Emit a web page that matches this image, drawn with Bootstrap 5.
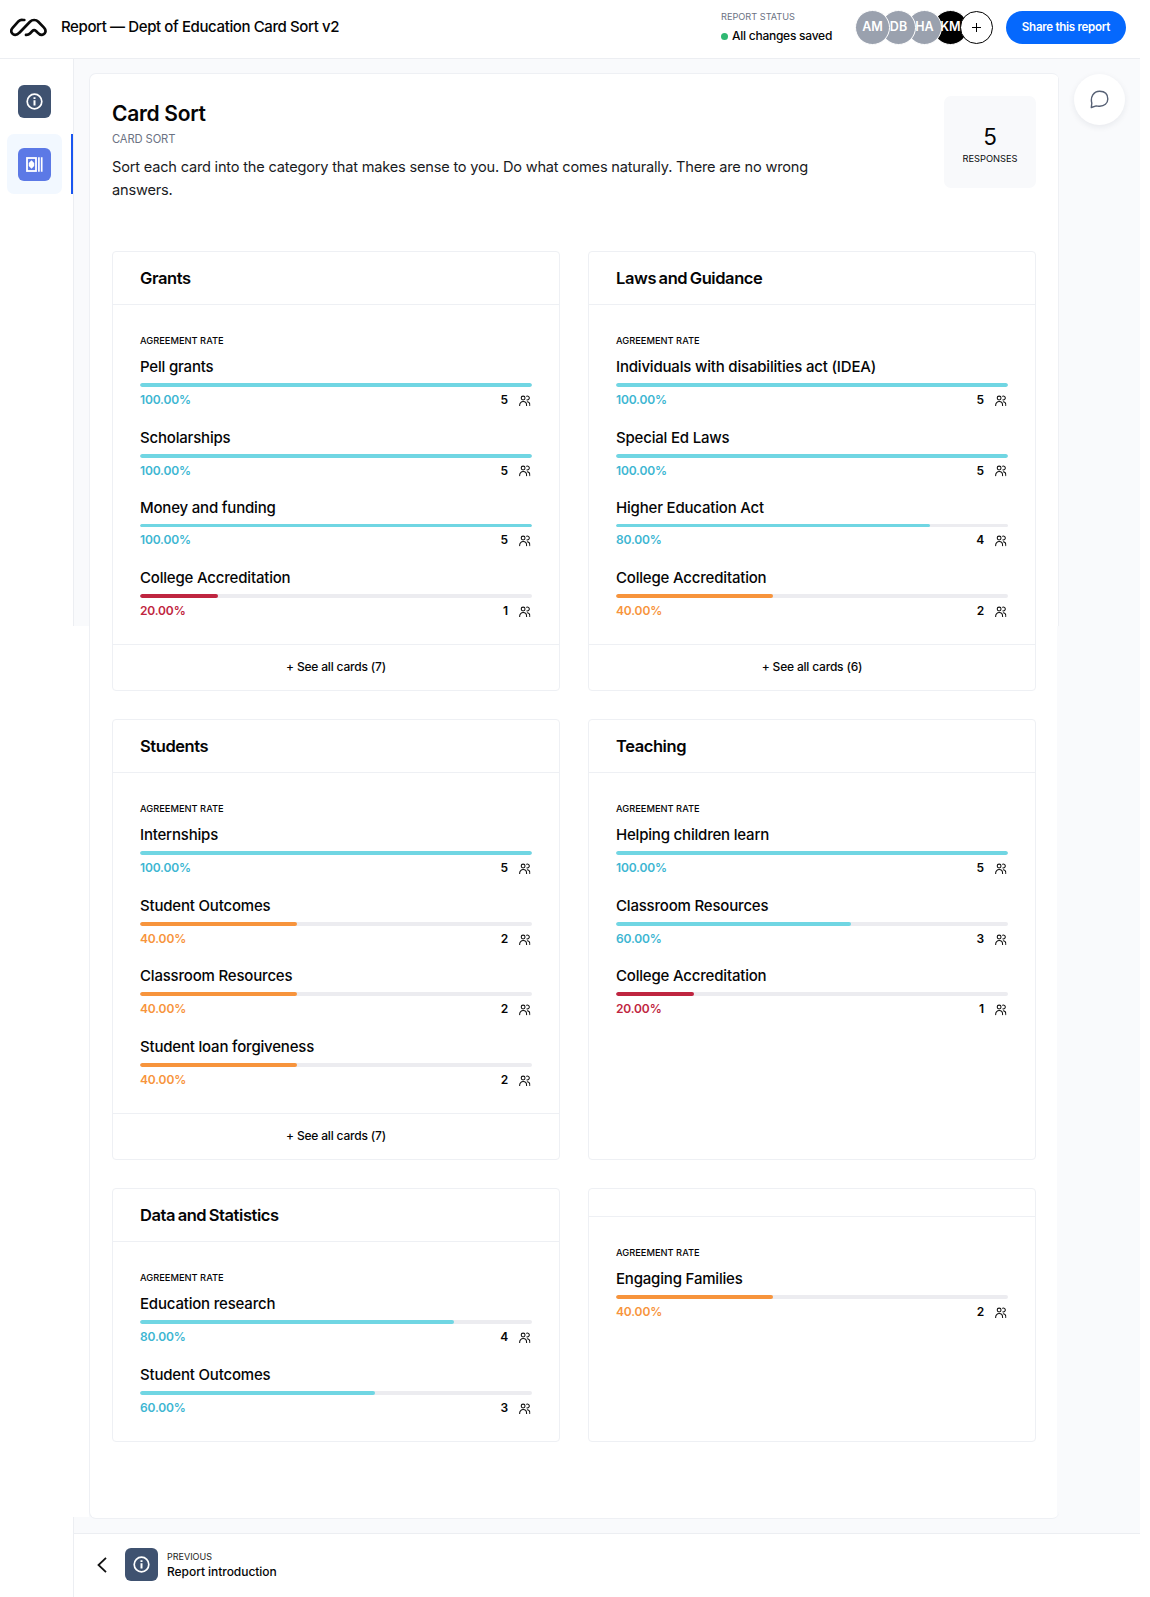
<!DOCTYPE html>
<html lang="en">
<head>
<meta charset="utf-8">
<meta name="viewport" content="width=device-width, initial-scale=1">
<title>Report — Dept of Education Card Sort v2</title>
<link href="https://cdn.jsdelivr.net/npm/bootstrap@5.3.0/dist/css/bootstrap.min.css" rel="stylesheet">
<style>
body{font-family:Inter,"Liberation Sans",sans-serif;color:#050506;background:#fff;height:1597px;overflow:hidden}
.app{width:1140px;height:1597px}
.topbar{height:59px;border-bottom:1px solid #eceef2;padding:0 14px 4px 10px}
.doc-title{font-size:15px;font-weight:500;line-height:20px;margin-left:14px;letter-spacing:-.39px}
.cap{font-size:9.2px;line-height:14px;color:#6b7283}
.saved{font-size:12px;font-weight:500;line-height:16px;letter-spacing:-.25px}
.foot .saved{letter-spacing:-.05px}
.dot{width:7px;height:7px;background:#2fb872}
.status{width:134px}
.ava{width:35px;height:35px;border:1.5px solid #fff;margin-right:-9px;font-size:12.5px;font-weight:600;color:#fff;background:#9aa1ae;position:relative}
.ava.black{background:#000;margin-right:-8px}
.ava.plus{width:33px;height:33px;background:#fff;border:1.5px solid #000;z-index:5;margin:0 13px 0 0;color:#000}
.share{width:120px;height:33px;background:#0568fd;color:#fff;font-size:11.6px;font-weight:600;letter-spacing:-.3px;padding:1px 0 0}
.side{width:73px;padding:26px 0 0 7px}
.tile{width:33px;height:33px;border-radius:6px;background:#3f5270}
.side>.tile{margin-left:11px}
.foot .tile{margin:0 9px 0 18px}
.tile.blue{background:#5c79e6}
.sel{height:60px;margin-top:16px}
.sel .bg-sel{width:55px;background:#f2f8ff;border-radius:7px}
.sel .edge{width:2px;background:#1a56f0}
.gutter{width:16px}
.shade{background:#f9fafc;border-left:1px solid #eceef2}
.shade-top{height:567px}
.shade-end{height:16px}
.right-area{background:#f9fafc}
.panel{width:970px;height:1446px;margin-top:14px;border:1px solid #eef0f4;border-right:0;border-radius:7px;background:linear-gradient(#eef0f4,#eef0f4) right top/1px 552px no-repeat,linear-gradient(#f9fafc,#f9fafc) right bottom/2px 892px no-repeat,#fff;padding:22px 23px 0 22px}
.intro{height:155px}
.intro h1{font-size:21px;line-height:26px;font-weight:600;margin:5px 0 0;letter-spacing:-.3px}
.sub{font-size:11.2px;line-height:16px;color:#6b7283;margin:4px 0 0;letter-spacing:-.1px}
.desc{font-size:14.6px;line-height:22.4px;margin:9.4px 0 0;width:712px;letter-spacing:-.2px;color:#1a1b1e}
.resp{width:92px;height:92px;background:#f8f9fb;border-radius:7px;padding-top:5px}
.resp .num{font-size:22.5px;line-height:28px}
.resp .cap{color:#0b0c0f;font-size:9.3px;line-height:16px}
.sorts{display:grid;grid-template-columns:448px 448px;gap:28px}
.sort{border-color:#eef0f4;border-radius:4px;--bs-card-border-color:#eef0f4}
.sort .card-header{background:#fff;border-bottom:1px solid #eef0f4;height:53px;padding:0 27px;font-size:16.5px;font-weight:600;line-height:52px;letter-spacing:-.42px;word-spacing:-1.2px}
.sort .card-header.blank{height:28px}
.sort .card-body{padding:30px 27px 24px}
.sort .card-footer{background:#fff;border-top:1px solid #eef0f4;height:46px;padding:0;line-height:44px;font-size:12px;font-weight:500;text-align:center;letter-spacing:-.19px}
.rate{font-size:9.3px;line-height:12px;font-weight:500;margin-bottom:9px}
.item{margin-bottom:17.7px}
.item:last-child{margin-bottom:0}
.item .nm{font-size:15px;line-height:22px;font-weight:500;letter-spacing:-.19px}
.item .progress{height:4px;margin:5px 0 4px;background:#ececf0;border-radius:2px}
.item .progress-bar{border-radius:2px}
.item.thin .progress{height:3px}
.item .pct{font-size:12px;line-height:18px;font-weight:600;letter-spacing:-.15px}
.teal .progress-bar{background:#70d6e3}.teal .pct span:first-child{color:#3db6d2}
.orange .progress-bar{background:#f7943c}.orange .pct span:first-child{color:#f7943c}
.red .progress-bar{background:#bf2540}.red .pct span:first-child{color:#bf2540}
.ppl{width:11.5px;height:11.5px;margin:1px 1.5px 0 11px}
.chat{width:51px;height:51px;background:#fff;box-shadow:0 2px 6px rgba(30,40,70,.08);margin:15px 0 0 15px}
.foot{height:64px;border-top:1px solid #eceef2;border-left:1px solid #eceef2;margin-left:73px;padding:0 0 2px 23px;background:#fff}
.foot .cap{color:#1c1d20;font-size:9px}
</style>
<script src="https://cdn.jsdelivr.net/npm/bootstrap@5.3.0/dist/js/bootstrap.bundle.min.js"></script>
</head>
<body>
<svg class="d-none">
<symbol id="ppl" viewBox="0 0 12 12"><g fill="none" stroke="#111" stroke-width="1.1" stroke-linecap="round"><circle cx="4.3" cy="3.2" r="2"/><path d="M.7 11.2V10.4a3.6 3.6 0 0 1 7.2 0v.8M8 1.3a2 2 0 1 1 .3 3.8M8.800 7a3.200 3.200 0 0 1 2.500 3.400v.8"/></g></symbol>
<symbol id="info" viewBox="0 0 17 17"><circle cx="8.5" cy="8.5" r="7.3" fill="none" stroke="#fff" stroke-width="1.7"/><path d="M8.5 7.2v5.3M8.5 4.2v1.9" stroke="#fff" stroke-width="2"/></symbol>
</svg>
<div class="app d-flex flex-column">
<header class="topbar d-flex align-items-center">
<svg width="37" height="19" viewBox="0 0 37 19" fill="none" stroke="#0a0a0a" stroke-width="2.7" stroke-linecap="round" stroke-linejoin="round"><path d="M14.3 2H13C11 1.6 9.8 2 8.6 3.2L2.6 9.8C-.3 13 2 16.8 5.3 16.8C7 16.8 8.2 16 9.4 14.7L20 3.8C22.3 1.4 26 1.4 28.3 3.8L34 9.6C37 13 35 16.6 32 16.8C29.8 17 28.8 16 27.6 14.6L26 13C24.6 11.8 23.6 11.8 22.4 13L20 15.5C18.8 16.7 17.8 17 16 16.9"/></svg>
<div class="doc-title">Report — Dept of Education Card Sort v2</div>
<div class="status ms-auto"><div class="cap mb-1">REPORT STATUS</div><div class="saved d-flex align-items-center gap-1"><span class="dot rounded-circle"></span>All changes saved</div></div>
<div class="d-flex align-items-center">
<div class="ava rounded-circle d-flex align-items-center justify-content-center z-3">AM</div>
<div class="ava rounded-circle d-flex align-items-center justify-content-center z-2">DB</div>
<div class="ava rounded-circle d-flex align-items-center justify-content-center z-1">HA</div>
<div class="ava black rounded-circle d-flex align-items-center justify-content-center z-0">KM</div>
<div class="ava plus rounded-circle d-flex align-items-center justify-content-center"><svg width="9" height="9"><path d="M4.5 0v9M0 4.5h9" stroke="#000"/></svg></div>
</div>
<button class="share btn rounded-pill">Share this report</button>
</header>
<div class="d-flex flex-grow-1">
<nav class="side">
<div class="tile d-flex align-items-center justify-content-center"><svg width="17" height="17"><use href="#info"/></svg></div>
<div class="sel d-flex justify-content-between"><div class="bg-sel d-flex align-items-center justify-content-center"><div class="tile blue d-flex align-items-center justify-content-center"><svg width="17" height="15" viewBox="0 0 17 15"><rect x="1" y="1" width="9" height="13" fill="none" stroke="#fff" stroke-width="1.8"/><path d="M5.5 3.2 8.2 6v3L5.5 11.8 2.8 9V6Z" fill="#fff"/><path d="M12.9.2v14.6M15.7.2v14.6" stroke="#fff" stroke-width="1.7"/></svg></div></div><div class="edge"></div></div>
</nav>
<div class="gutter d-flex flex-column justify-content-between"><div class="shade shade-top"></div><div class="shade shade-end"></div></div>
<div class="right-area d-flex flex-grow-1">
<main class="panel">
<div class="intro d-flex justify-content-between">
<div><h1>Card Sort</h1><p class="sub">CARD SORT</p><p class="desc">Sort each card into the category that makes sense to you. Do what comes naturally. There are no wrong answers.</p></div>
<div class="resp d-flex flex-column align-items-center justify-content-center"><div class="num">5</div><div class="cap">RESPONSES</div></div>
</div>
<div class="sorts">
<section class="card sort"><div class="card-header">Grants</div><div class="card-body"><div class="rate">AGREEMENT RATE</div>
<div class="item teal"><div class="nm">Pell grants</div><div class="progress"><div class="progress-bar" style="width:100%"></div></div><div class="pct d-flex align-items-center"><span>100.00%</span><span class="ms-auto">5</span><svg class="ppl"><use href="#ppl"/></svg></div></div>
<div class="item teal"><div class="nm">Scholarships</div><div class="progress"><div class="progress-bar" style="width:100%"></div></div><div class="pct d-flex align-items-center"><span>100.00%</span><span class="ms-auto">5</span><svg class="ppl"><use href="#ppl"/></svg></div></div>
<div class="item teal thin"><div class="nm">Money and funding</div><div class="progress"><div class="progress-bar" style="width:100%"></div></div><div class="pct d-flex align-items-center"><span>100.00%</span><span class="ms-auto">5</span><svg class="ppl"><use href="#ppl"/></svg></div></div>
<div class="item red"><div class="nm">College Accreditation</div><div class="progress"><div class="progress-bar" style="width:20%"></div></div><div class="pct d-flex align-items-center"><span>20.00%</span><span class="ms-auto">1</span><svg class="ppl"><use href="#ppl"/></svg></div></div>
</div><div class="card-footer">+ See all cards (7)</div></section>
<section class="card sort"><div class="card-header">Laws and Guidance</div><div class="card-body"><div class="rate">AGREEMENT RATE</div>
<div class="item teal"><div class="nm">Individuals with disabilities act (IDEA)</div><div class="progress"><div class="progress-bar" style="width:100%"></div></div><div class="pct d-flex align-items-center"><span>100.00%</span><span class="ms-auto">5</span><svg class="ppl"><use href="#ppl"/></svg></div></div>
<div class="item teal"><div class="nm">Special Ed Laws</div><div class="progress"><div class="progress-bar" style="width:100%"></div></div><div class="pct d-flex align-items-center"><span>100.00%</span><span class="ms-auto">5</span><svg class="ppl"><use href="#ppl"/></svg></div></div>
<div class="item teal thin"><div class="nm">Higher Education Act</div><div class="progress"><div class="progress-bar" style="width:80%"></div></div><div class="pct d-flex align-items-center"><span>80.00%</span><span class="ms-auto">4</span><svg class="ppl"><use href="#ppl"/></svg></div></div>
<div class="item orange"><div class="nm">College Accreditation</div><div class="progress"><div class="progress-bar" style="width:40%"></div></div><div class="pct d-flex align-items-center"><span>40.00%</span><span class="ms-auto">2</span><svg class="ppl"><use href="#ppl"/></svg></div></div>
</div><div class="card-footer">+ See all cards (6)</div></section>
<section class="card sort"><div class="card-header">Students</div><div class="card-body"><div class="rate">AGREEMENT RATE</div>
<div class="item teal"><div class="nm">Internships</div><div class="progress"><div class="progress-bar" style="width:100%"></div></div><div class="pct d-flex align-items-center"><span>100.00%</span><span class="ms-auto">5</span><svg class="ppl"><use href="#ppl"/></svg></div></div>
<div class="item orange"><div class="nm">Student Outcomes</div><div class="progress"><div class="progress-bar" style="width:40%"></div></div><div class="pct d-flex align-items-center"><span>40.00%</span><span class="ms-auto">2</span><svg class="ppl"><use href="#ppl"/></svg></div></div>
<div class="item orange"><div class="nm">Classroom Resources</div><div class="progress"><div class="progress-bar" style="width:40%"></div></div><div class="pct d-flex align-items-center"><span>40.00%</span><span class="ms-auto">2</span><svg class="ppl"><use href="#ppl"/></svg></div></div>
<div class="item orange"><div class="nm">Student loan forgiveness</div><div class="progress"><div class="progress-bar" style="width:40%"></div></div><div class="pct d-flex align-items-center"><span>40.00%</span><span class="ms-auto">2</span><svg class="ppl"><use href="#ppl"/></svg></div></div>
</div><div class="card-footer">+ See all cards (7)</div></section>
<section class="card sort"><div class="card-header">Teaching</div><div class="card-body"><div class="rate">AGREEMENT RATE</div>
<div class="item teal"><div class="nm">Helping children learn</div><div class="progress"><div class="progress-bar" style="width:100%"></div></div><div class="pct d-flex align-items-center"><span>100.00%</span><span class="ms-auto">5</span><svg class="ppl"><use href="#ppl"/></svg></div></div>
<div class="item teal"><div class="nm">Classroom Resources</div><div class="progress"><div class="progress-bar" style="width:60%"></div></div><div class="pct d-flex align-items-center"><span>60.00%</span><span class="ms-auto">3</span><svg class="ppl"><use href="#ppl"/></svg></div></div>
<div class="item red"><div class="nm">College Accreditation</div><div class="progress"><div class="progress-bar" style="width:20%"></div></div><div class="pct d-flex align-items-center"><span>20.00%</span><span class="ms-auto">1</span><svg class="ppl"><use href="#ppl"/></svg></div></div>
</div></section>
<section class="card sort"><div class="card-header">Data and Statistics</div><div class="card-body"><div class="rate">AGREEMENT RATE</div>
<div class="item teal"><div class="nm">Education research</div><div class="progress"><div class="progress-bar" style="width:80%"></div></div><div class="pct d-flex align-items-center"><span>80.00%</span><span class="ms-auto">4</span><svg class="ppl"><use href="#ppl"/></svg></div></div>
<div class="item teal"><div class="nm">Student Outcomes</div><div class="progress"><div class="progress-bar" style="width:60%"></div></div><div class="pct d-flex align-items-center"><span>60.00%</span><span class="ms-auto">3</span><svg class="ppl"><use href="#ppl"/></svg></div></div>
</div></section>
<section class="card sort"><div class="card-header blank"></div><div class="card-body"><div class="rate">AGREEMENT RATE</div>
<div class="item orange"><div class="nm">Engaging Families</div><div class="progress"><div class="progress-bar" style="width:40%"></div></div><div class="pct d-flex align-items-center"><span>40.00%</span><span class="ms-auto">2</span><svg class="ppl"><use href="#ppl"/></svg></div></div>
</div></section>
</div>
</main>
<div class="chat rounded-circle d-flex align-items-center justify-content-center"><svg width="19" height="19" viewBox="0 0 19 19" fill="none" stroke="#566074" stroke-width="1.4" stroke-linejoin="round"><path d="M1.3 17.5L1.8 13.2C.2 7 3.5 1.2 9.6 1.2S17.8 4.5 17.8 9 14.2 16.3 9.7 16.3C8.2 16.3 7.3 15.9 6.2 15.9Z"/></svg></div>
</div>
</div>
<footer class="foot d-flex align-items-center">
<svg width="10" height="16" viewBox="0 0 10 16" fill="none" stroke="#111" stroke-width="1.8"><path d="M9 .8 1.5 8 9 15.2"/></svg>
<div class="tile d-flex align-items-center justify-content-center"><svg width="17" height="17"><use href="#info"/></svg></div>
<div><div class="cap">PREVIOUS</div><div class="saved">Report introduction</div></div>
</footer>
</div>
</body>
</html>
